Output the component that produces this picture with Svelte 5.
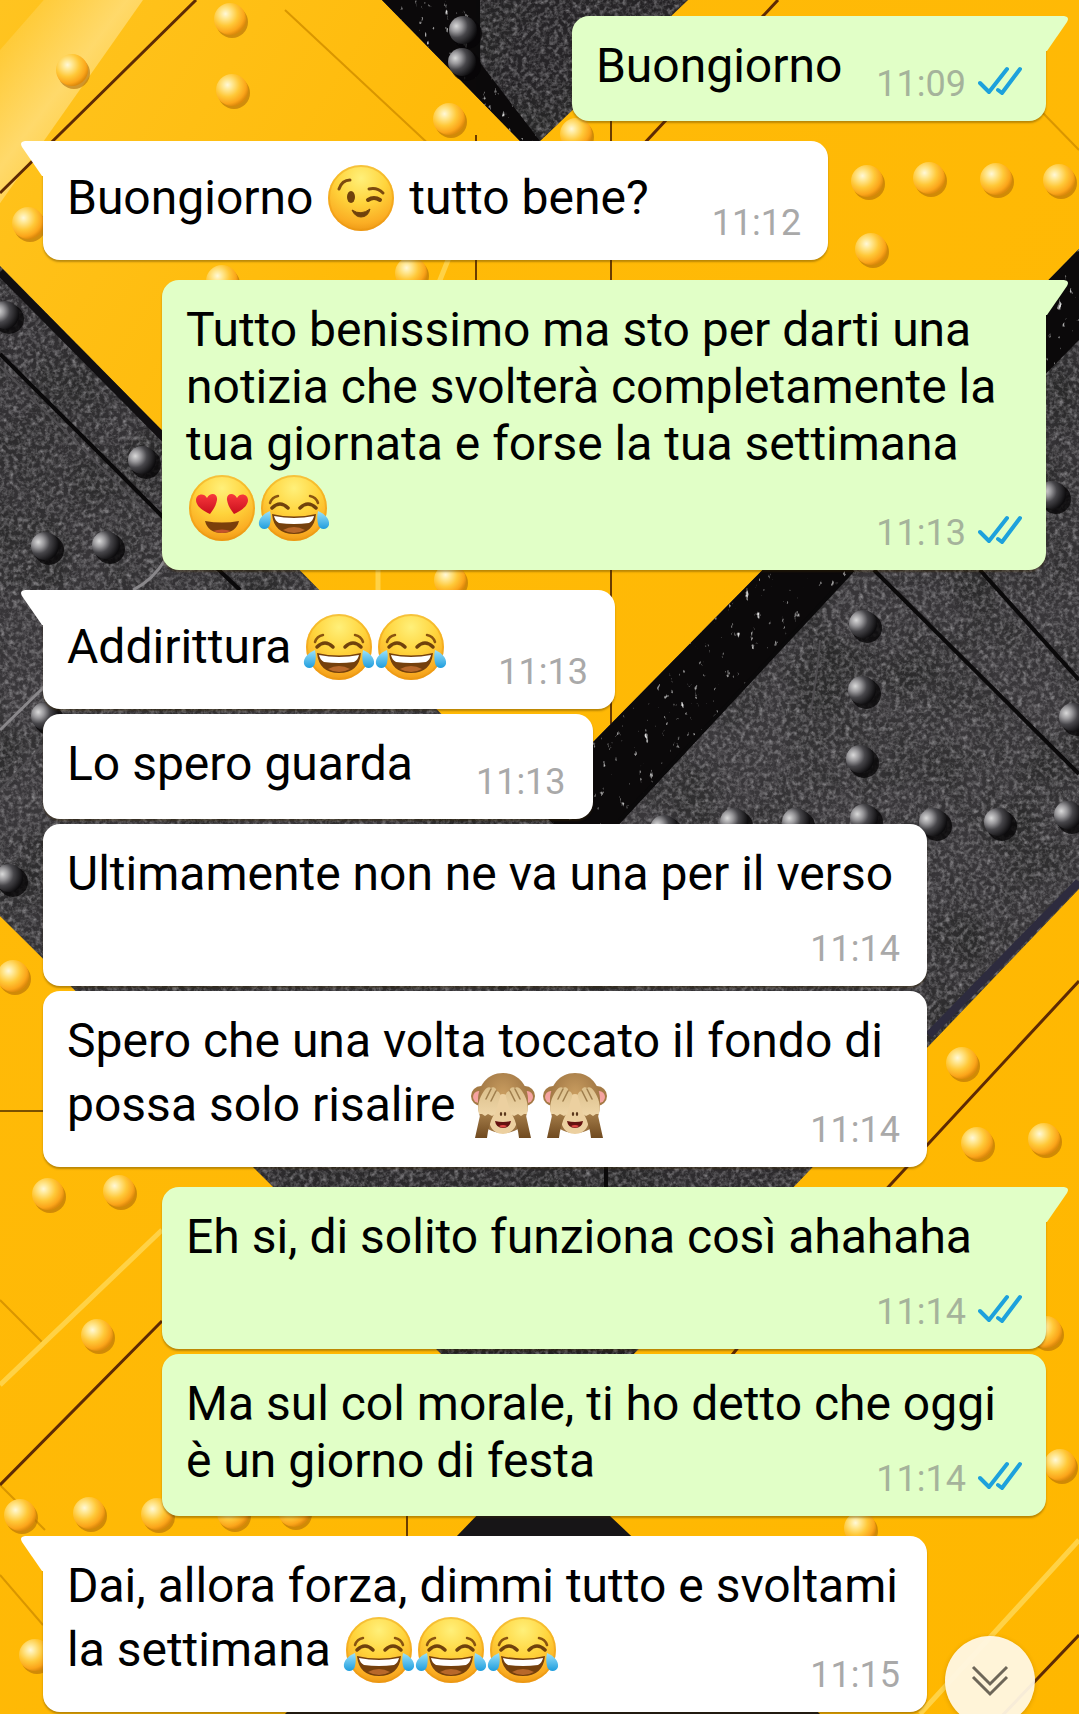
<script>
  const messages = [
    { out: true, first: true, parts: ['Buongiorno'], time: '11:09' },
    { out: false, first: true, parts: ['Buongiorno ', { e: 'wink' }, ' tutto bene?'], time: '11:12', tall: true },
    {
      out: true,
      first: true,
      parts: [
        'Tutto benissimo ma sto per darti una notizia che svolterà completamente la tua giornata e forse la tua settimana ',
        { e: 'love' },
        { e: 'joy' }
      ],
      time: '11:13',
      tall: true
    },
    { out: false, first: true, parts: ['Addirittura ', { e: 'joy' }, { e: 'joy' }], time: '11:13', tall: true, tight: true },
    { out: false, parts: ['Lo spero guarda'], time: '11:13' },
    { out: false, parts: ['Ultimamente non ne va una per il verso'], time: '11:14' },
    {
      out: false,
      parts: ['Spero che una volta toccato il fondo di possa solo risalire ', { e: 'monkey' }, { e: 'monkey' }],
      time: '11:14',
      tall: true
    },
    { out: true, first: true, parts: ['Eh si, di solito funziona così ahahaha'], time: '11:14' },
    { out: true, parts: ['Ma sul col morale, ti ho detto che oggi è un giorno di festa'], time: '11:14' },
    {
      out: false,
      first: true,
      parts: ['Dai, allora forza, dimmi tutto e svoltami la settimana ', { e: 'joy' }, { e: 'joy' }, { e: 'joy' }],
      time: '11:15',
      tall: true
    }
  ];

  const names = { wink: '😉', love: '😍', joy: '😂', monkey: '🙈' };

  const goldRivets = [
    [72, 70], [230, 19], [232, 90], [449, 119], [28, 223], [867, 181], [929, 178], [996, 179], [1059, 180],
    [871, 249], [411, 273], [222, 281], [576, 134], [450, 580], [13, 976], [962, 1063], [977, 1143],
    [1044, 1139], [48, 1194], [119, 1191], [97, 1335], [1046, 1332], [20, 1515], [89, 1513], [157, 1514],
    [233, 1513], [294, 1511], [1060, 1465], [860, 1528], [35, 1655]
  ];
  const darkRivets = [
    [142, 460], [45, 546], [106, 545], [5, 315], [9, 878], [863, 624], [862, 690], [860, 759], [933, 822],
    [998, 822], [1068, 815], [1073, 717], [734, 822], [796, 822], [864, 818], [664, 829], [463, 30],
    [462, 62], [1052, 495], [45, 716]
  ];
</script>

{#snippet emoji(kind)}
  <svg class="emoji" viewBox="0 0 72 71" role="img" aria-label={names[kind]}>
    {#if kind === 'monkey'}
      <g>
        <circle cx="14" cy="27" r="10" fill="#a47a45" />
        <circle cx="58" cy="27" r="10" fill="#a47a45" />
        <circle cx="12" cy="28" r="6" fill="#f5a3a0" />
        <circle cx="60" cy="28" r="6" fill="#f5a3a0" />
        <path d="M36 4C20 4 11 17 11 31c0 10 1 16 5 24 4 6 12 9 20 9s16-3 20-9c4-8 5-14 5-24C61 17 52 4 36 4z" fill="url(#fur)" />
        <path d="M36 25c-5 0-7 6-8 12-1 7-7 12-5 19 2 6 8 9 13 9s11-3 13-9c2-7-4-12-5-19-1-6-3-12-8-12z" fill="#ecd0a0" />
        <path d="M14 42 8 69h12c1-9 3-16 7-24zM58 42l6 27H52c-1-9-3-16-7-24z" fill="url(#arm)" />
        <path d="M12 45C10 37 12 29 17 22c2-3 5-5 7-3 2-2 6 0 5 3 3 0 5 3 4 6l-5 17-3 2-4-2-3 2-3-2z" fill="url(#hand)" />
        <path d="M60 45c2-8 0-16-5-23-2-3-5-5-7-3-2-2-6 0-5 3-3 0-5 3-4 6l5 17 3 2 4-2 3 2 3-2z" fill="url(#hand)" />
        <path d="m24 20-5 10m10-8-5 10m24-12 5 10m-10-8 5 10" fill="none" stroke="#a1804f" stroke-width="1.6" stroke-linecap="round" />
        <ellipse cx="34" cy="45" rx="1.2" ry="2" fill="#5b371c" />
        <ellipse cx="38" cy="45" rx="1.2" ry="2" fill="#5b371c" />
        <path d="M28 52q8 2 16 0-1 7-8 7t-8-7z" fill="#64110f" />
        <path d="M32 57q4-2 8 0-4 3-8 0z" fill="#e24745" />
      </g>
    {:else}
      <circle cx="36" cy="36" r="33" fill="url(#face)" />
      <circle cx="36" cy="36" r="32" fill="none" stroke="#e8930c" stroke-opacity=".4" stroke-width="2" />
      {#if kind === 'wink'}
        <path d="M14 27q3-9 11-9M44 27q8-2 14 4" fill="none" stroke="#7c4a0e" stroke-width="3" stroke-linecap="round" />
        <ellipse cx="26" cy="35" rx="4" ry="6" fill="#70420c" />
        <path d="M43 38q6-4 12 0" fill="none" stroke="#70420c" stroke-width="4" stroke-linecap="round" />
        <path d="M27 48q9 6 18-1-2 8-9 8-6 0-9-7z" fill="#70420c" stroke="#70420c" stroke-linejoin="round" />
      {:else if kind === 'love'}
        <path d="M24 42c-7-3-14-8-14-14 0-6 8-8 11-2 3-6 11-5 10 2-1 6-4 10-7 14z" fill="url(#heart)" />
        <path d="M48 42c7-3 14-8 14-14 0-6-8-8-11-2-3-6-11-5-10 2 1 6 4 10 7 14z" fill="url(#heart)" />
        <path d="M19 49q17 3 34 0-3 12-17 12T19 49z" fill="#7a3f0b" />
        <path d="M27 59q9-3 18 0-9 4-18 0z" fill="#c4542c" />
      {:else}
        <path d="M12 31q2-6 8-7M60 31q-2-6-8-7" fill="none" stroke="#8a5410" stroke-width="2.5" stroke-linecap="round" />
        <path d="M14 36q8-8 16 0M42 36q8-8 16 0" fill="none" stroke="#70420c" stroke-width="3.5" stroke-linecap="round" />
        <path d="M14 42q22 5 44 0-2 20-22 20T14 42z" fill="#75400c" />
        <path d="M16 44q20 4 40 0-1 5-5 7-15 2-30 0-4-2-5-7z" fill="#fff" />
        <path d="M25 58q11-6 22 0-11 6-22 0z" fill="#b8682a" />
        <path d="M12 39c-7 3-12 8-11 14 2 6 10 5 11-1 1-4 1-9 0-13z" fill="url(#tear)" />
        <path d="M60 39c7 3 12 8 11 14-2 6-10 5-11-1-1-4-1-9 0-13z" fill="url(#tear)" />
      {/if}
    {/if}
  </svg>
{/snippet}

<main class="chat">
  <svg class="wallpaper" viewBox="0 0 1079 1714" preserveAspectRatio="xMidYMin slice" aria-hidden="true">
    <defs>
      <linearGradient id="gold" x1="0" y1="0" x2="1" y2="1">
        <stop offset="0" stop-color="#ffc420" />
        <stop offset=".25" stop-color="#ffba08" />
        <stop offset="1" stop-color="#ffb700" />
      </linearGradient>
      <linearGradient id="glare" x1="0" y1="0" x2="1" y2="1">
        <stop offset=".2" stop-color="#ffe9a0" stop-opacity="0" />
        <stop offset=".5" stop-color="#ffe9a0" stop-opacity=".6" />
        <stop offset=".8" stop-color="#ffe9a0" stop-opacity="0" />
      </linearGradient>
      <radialGradient id="goldRivet" cx=".36" cy=".34" r=".68">
        <stop offset="0" stop-color="#fff8d8" />
        <stop offset=".22" stop-color="#ffe894" />
        <stop offset=".55" stop-color="#ffc838" />
        <stop offset=".85" stop-color="#fba51a" />
        <stop offset="1" stop-color="#dd8a0c" />
      </radialGradient>
      <radialGradient id="darkRivet" cx=".26" cy=".36" r=".75">
        <stop offset="0" stop-color="#dadada" />
        <stop offset=".28" stop-color="#98979a" />
        <stop offset=".55" stop-color="#47464a" />
        <stop offset="1" stop-color="#0c0b0d" />
      </radialGradient>
      <linearGradient id="plate" gradientUnits="userSpaceOnUse" x1="0" y1="260" x2="0" y2="1450">
        <stop offset="0" stop-color="#302e31" />
        <stop offset=".4" stop-color="#3a383b" />
        <stop offset=".7" stop-color="#333134" />
        <stop offset="1" stop-color="#1b191b" />
      </linearGradient>
      <radialGradient id="face" cx=".5" cy=".2" r=".85">
        <stop offset="0" stop-color="#fff07a" />
        <stop offset=".45" stop-color="#ffd43c" />
        <stop offset=".8" stop-color="#fbae24" />
        <stop offset="1" stop-color="#e8900f" />
      </radialGradient>
      <linearGradient id="heart" x1="0" y1="0" x2="0" y2="1">
        <stop offset="0" stop-color="#f8383c" />
        <stop offset="1" stop-color="#c90f1d" />
      </linearGradient>
      <linearGradient id="tear" x1="0" y1="0" x2="0" y2="1">
        <stop offset="0" stop-color="#9be2fb" />
        <stop offset="1" stop-color="#1f9ddd" />
      </linearGradient>
      <radialGradient id="fur" cx=".5" cy=".35" r=".6">
        <stop offset="0" stop-color="#c99d60" />
        <stop offset="1" stop-color="#9a7140" />
      </radialGradient>
      <linearGradient id="arm" x1="0" y1="0" x2="0" y2="1">
        <stop offset="0" stop-color="#a9814c" />
        <stop offset="1" stop-color="#704a20" />
      </linearGradient>
      <linearGradient id="hand" x1="0" y1="0" x2="0" y2="1">
        <stop offset="0" stop-color="#dcc08c" />
        <stop offset="1" stop-color="#efd6a8" />
      </linearGradient>
      <filter id="grain" x="0" y="0" width="1" height="1">
        <feTurbulence type="fractalNoise" baseFrequency=".22" numOctaves="3" seed="4" />
        <feColorMatrix values="0 0 0 0 .55  0 0 0 0 .54  0 0 0 0 .56  .9 .6 0 0 -.64" />
        <feComposite in2="SourceGraphic" operator="in" />
      </filter>
      <filter id="stains" x="0" y="0" width="1" height="1">
        <feTurbulence type="fractalNoise" baseFrequency=".014" numOctaves="3" seed="12" />
        <feColorMatrix values="0 0 0 0 .02  0 0 0 0 .02  0 0 0 0 .02  2 0 0 0 -.8" />
        <feComposite in2="SourceGraphic" operator="in" />
      </filter>
      <filter id="flecks" x="0" y="0" width="1" height="1">
        <feTurbulence type="fractalNoise" baseFrequency=".16 .1" numOctaves="3" seed="9" />
        <feColorMatrix values="0 0 0 0 .75  0 0 0 0 .75  0 0 0 0 .75  6 0 0 0 -4.2" />
        <feComposite in2="SourceGraphic" operator="in" />
      </filter>
      <path id="topWedge" d="M382 0 520 141q10 9 20 0L688 0z" />
      <path id="midBand" d="M0 266 531 805 1079 249V889L540 1452 0 916z" />
      <path id="lowWedge" d="M540 1450 285 1714H820z" />
      <path id="gloss" d="M382 0 520 141q10 9 20 0L478 60V0zM1079 249 531 805l60 50L853 570 1079 340z" />
    </defs>
    <rect width="1079" height="1714" fill="url(#gold)" />
    <path d="M-70 130 70-30 150-10-40 260z" fill="url(#glare)" />
    <g fill="none">
      <path d="M285 10 435 150M1040 110l39 40M0 1300l45 45M0 1485l45 45M0 1575l43 50" stroke="#d99600" stroke-width="2" />
      <path d="M476 135V290M611 115V750M407 1510v30" stroke="#6b3c00" stroke-width="2" />
      <path d="M378 560V600M162 1230 0 1385M1079 1540 920 1714M450 255l-12 30" stroke="#ffd246" stroke-width="5" />
      <path d="M196 0 0 193M778 0 640 148M1079 981 880 1196M740 1345l-20 25M162 1321 0 1485M1079 1635l-80 84" stroke="#5e2a04" stroke-width="3" />
      <path d="M0 1111H50" stroke="#7a5000" stroke-width="2" />
    </g>
    <use href="#topWedge" fill="#262427" />
    <use href="#midBand" fill="url(#plate)" />
    <use href="#lowWedge" fill="#171517" />
    <g filter="url(#stains)">
      <use href="#topWedge" />
      <use href="#midBand" />
    </g>
    <g filter="url(#grain)">
      <use href="#topWedge" />
      <use href="#midBand" />
    </g>
    <use href="#gloss" fill="#0b090a" />
    <use href="#gloss" filter="url(#flecks)" />
    <g fill="none">
      <path d="M0 272 165 439" stroke="#100e10" stroke-width="8" />
      <path d="M0 354 165 519 240 590M874 570 1079 774M853 570 620 820M980 570l99 110M478 0V90M606 1160v30" stroke="#0a090a" stroke-width="4" />
      <path d="M0 730 45 686M165 560q-12 20-32 30" stroke="#8a888b" stroke-width="3" />
      <path d="M0 366 150 516M0 790 43 745M820 640q-2 30-10 75" stroke="#4f4d50" stroke-width="2" />
      <path d="M929 1035 1079 882" stroke="#2d2b3e" stroke-width="8" />
    </g>
    {#each goldRivets as [x, y]}
      <circle cx={x + 2} cy={y + 3} r="16" fill="#b06a08" fill-opacity=".6" />
      <circle cx={x} cy={y} r="16" fill="url(#goldRivet)" />
    {/each}
    {#each darkRivets as [x, y]}
      <circle cx={x + 4} cy={y + 4} r="15" fill="#060506" fill-opacity=".8" />
      <circle cx={x} cy={y} r="14" fill="url(#darkRivet)" />
    {/each}
  </svg>

  <ol class="messages">
    {#each messages as m}
      <li class="bubble" class:out={m.out} class:first={m.first}>
        {#if m.first}
          <svg class="tail" viewBox="0 0 22 36" aria-hidden="true">
            <path d="M0 0H18Q24 1 21 6L1 35H0z" />
          </svg>
        {/if}
        {#each m.parts as p}{#if p.e}{@render emoji(p.e)}{:else}{p}{/if}{/each}<span
          class="meta"
          class:tall={m.tall}
          class:tight={m.tight}
        ><time>{m.time}</time>{#if m.out}<svg class="ticks" viewBox="0 0 44 30" role="img" aria-label="Letto">
            <path d="M2 17 11 26 29 3M20 24l4 3L42 3" />
          </svg>{/if}</span>
      </li>
    {/each}
  </ol>

  <button class="jump" type="button" aria-label="Vai in fondo">
    <svg viewBox="0 0 40 34" aria-hidden="true"><path d="M3 3 20 20 37 3M3 13 20 30 37 13" /></svg>
  </button>
</main>

<style>
  :global(body) {
    margin: 0;
    background: #ffba00;
  }
  .chat {
    position: relative;
    min-height: 100vh;
    overflow: hidden;
    box-sizing: border-box;
    font-family: Roboto, 'Noto Sans', sans-serif;
    font-size: 48px;
    line-height: 57px;
    color: #000;
  }
  .wallpaper {
    position: absolute;
    inset: 0;
    width: 100%;
    height: 100%;
  }
  .messages {
    position: relative;
    display: flex;
    flex-direction: column;
    align-items: flex-start;
    gap: 5px;
    list-style: none;
    margin: 0;
    padding: 1px 33px 2px 43px;
  }
  .bubble {
    --fill: #fff;
    position: relative;
    display: flow-root;
    box-sizing: border-box;
    max-width: calc(100% - 119px);
    padding: 21px 22px 13px 24px;
    border-radius: 17px;
    background: var(--fill);
    box-shadow: 0 2px 2px rgba(60, 40, 0, 0.35);
  }
  .out {
    --fill: #e1ffc7;
    align-self: flex-end;
  }
  .first {
    margin-top: 15px;
    border-top-left-radius: 0;
  }
  .out.first {
    border-top-left-radius: 17px;
    border-top-right-radius: 0;
  }
  .tail {
    position: absolute;
    top: 0;
    right: 100%;
    width: 22px;
    height: 36px;
    fill: var(--fill);
    transform: scaleX(-1);
  }
  .out .tail {
    right: auto;
    left: 100%;
    transform: none;
  }
  .emoji {
    width: 72px;
    height: 71px;
    vertical-align: -19px;
  }
  .meta {
    float: right;
    display: flex;
    align-items: flex-end;
    box-sizing: border-box;
    height: 71px;
    margin-left: 63px;
    padding: 0 5px 3px 0;
    font-size: 36px;
    line-height: 42px;
    color: #a9a9a9;
  }
  .tall {
    height: 85px;
  }
  .tight {
    margin-left: 51px;
  }
  .out .meta {
    margin-left: 34px;
    padding-right: 2px;
    color: #a5b39b;
  }
  .ticks {
    width: 44px;
    height: 30px;
    margin: 0 0 9px 12px;
    fill: none;
    stroke: #1da1dc;
    stroke-width: 4;
    stroke-linecap: round;
    stroke-linejoin: round;
  }
  .jump {
    position: absolute;
    right: 44px;
    bottom: -12px;
    display: flex;
    justify-content: center;
    align-items: center;
    width: 90px;
    height: 90px;
    padding: 0;
    border: 0;
    border-radius: 50%;
    background: rgba(255, 247, 228, 0.95);
    box-shadow: 0 1px 4px rgba(120, 80, 0, 0.3);
  }
  .jump svg {
    width: 40px;
    height: 34px;
    fill: none;
    stroke: #6e6759;
    stroke-width: 3;
  }
</style>
